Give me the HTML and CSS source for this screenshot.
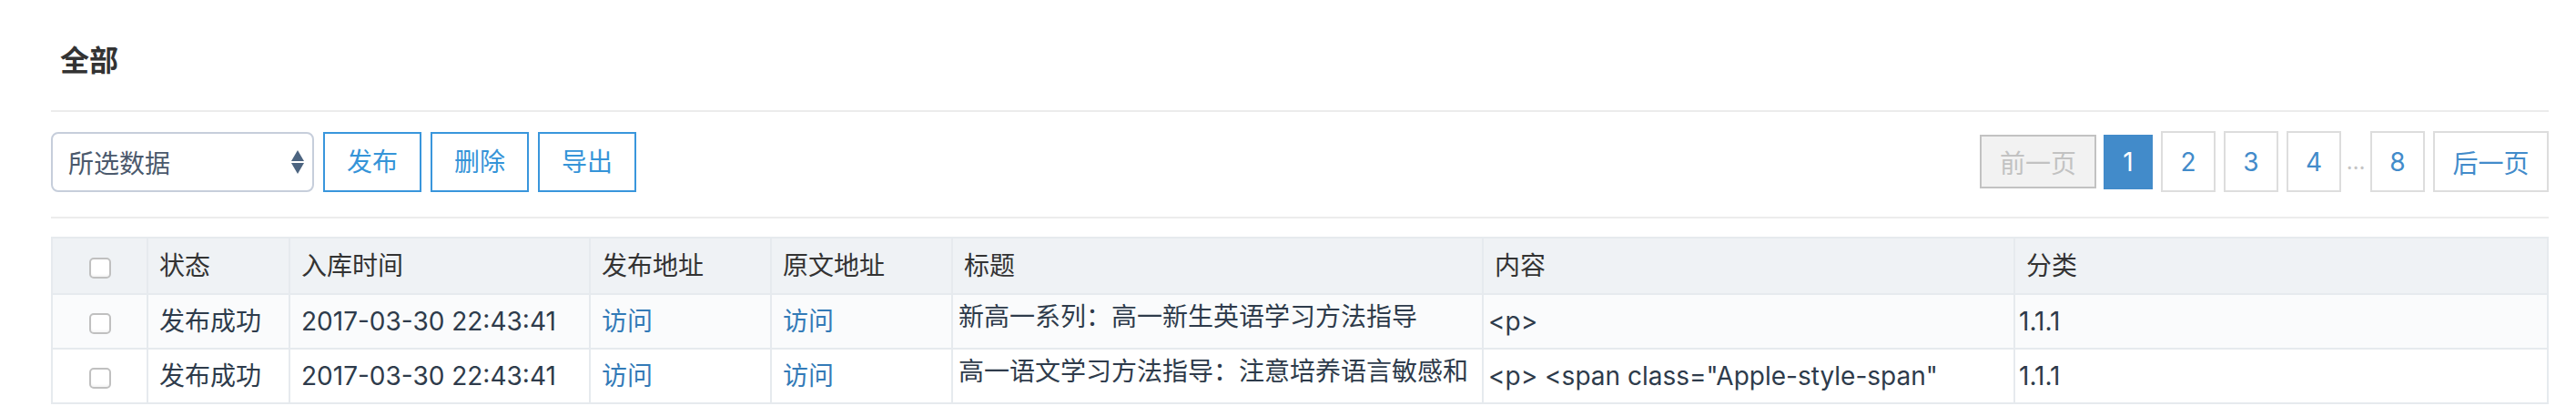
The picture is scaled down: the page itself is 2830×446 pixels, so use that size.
FILE: index.html
```html
<!DOCTYPE html>
<html lang="zh-CN">
<head>
  <meta charset="UTF-8">
  <title>全部</title>
  <link rel="stylesheet" href="styles.css">
</head>
<body>

<div class="page">
  <h2 class="title">全部</h2>

  <div class="toolbar">
    <div class="select">
      <span>所选数据</span>
      <svg class="arrows" width="14" height="26" viewBox="0 0 14 26">
        <polygon points="7,0 14,12 0,12" fill="#4c6480"/>
        <polygon points="0,14 14,14 7,26" fill="#4c6480"/>
      </svg>
    </div>
    <button class="btn">发布</button>
    <button class="btn">删除</button>
    <button class="btn">导出</button>

    <div class="pager">
      <span class="pg disabled">前一页</span>
      <span class="pg active">1</span>
      <a class="pg" href="#">2</a>
      <a class="pg" href="#">3</a>
      <a class="pg" href="#">4</a>
      <span class="dots">…</span>
      <a class="pg" href="#">8</a>
      <a class="pg wide" href="#">后一页</a>
    </div>
  </div>

  <table class="list">
    <colgroup>
      <col class="c-chk">
      <col class="c-state">
      <col class="c-time">
      <col class="c-url">
      <col class="c-url">
      <col class="c-title">
      <col class="c-content">
      <col>
    </colgroup>
    <thead>
      <tr>
        <th class="chk"><input type="checkbox" class="cb"></th>
        <th>状态</th>
        <th>入库时间</th>
        <th>发布地址</th>
        <th>原文地址</th>
        <th>标题</th>
        <th>内容</th>
        <th>分类</th>
      </tr>
    </thead>
    <tbody>
      <tr>
        <td class="chk"><input type="checkbox" class="cb"></td>
        <td>发布成功</td>
        <td>2017-03-30 22:43:41</td>
        <td><a href="#">访问</a></td>
        <td><a href="#">访问</a></td>
        <td class="ttl">新高一系列：高一新生英语学习方法指导</td>
        <td class="txt">&lt;p&gt;</td>
        <td class="cat">1.1.1</td>
      </tr>
      <tr>
        <td class="chk"><input type="checkbox" class="cb"></td>
        <td>发布成功</td>
        <td>2017-03-30 22:43:41</td>
        <td><a href="#">访问</a></td>
        <td><a href="#">访问</a></td>
        <td class="ttl">高一语文学习方法指导：注意培养语言敏感和</td>
        <td class="txt">&lt;p&gt; &lt;span class="Apple-style-span"</td>
        <td class="cat">1.1.1</td>
      </tr>
    </tbody>
  </table>
</div>

</body>
</html>
```

FILE: styles.css
```css
body { margin: 0; font-family: Inter, "Noto Sans CJK SC", sans-serif; font-size: 28px; color: #333; background: #fff; }
.page { padding: 0 30px 0 56px; }

.title { margin: 0; padding: 44px 0 31px 10px; font-size: 32px; line-height: 46px; font-weight: bold; color: #333; border-bottom: 2px solid #ececec; }

.toolbar { display: flex; align-items: center; padding: 21px 0 27px; border-bottom: 2px solid #ececec; }

.select { box-sizing: border-box; width: 289px; height: 66px; display: flex; align-items: center; padding: 0 9px 0 17px; border: 2px solid #c6cedb; border-radius: 8px; color: #4b596c; }
.select .arrows { margin-left: auto; }

.btn { box-sizing: border-box; width: 108px; height: 66px; margin-left: 10px; padding: 0; font-family: inherit; font-size: 28px; line-height: 62px; color: #3594d8; background: #fff; border: 2px solid #3996dc; cursor: pointer; }

.pager { margin-left: auto; display: flex; align-items: center; }
.pg { box-sizing: border-box; width: 60px; height: 67px; margin-left: 9px; display: flex; align-items: center; justify-content: center; border: 2px solid #ddd; background: #fff; color: #428bca; text-decoration: none; }
.pg.disabled { width: 128px; height: 59px; margin-left: 0; background: #f2f2f2; border-color: #c2c2c2; color: #c2c2c2; }
.pg.active { width: 54px; height: 60px; margin-left: 8px; background: #428bca; border-color: #428bca; color: #fff; }
.pg.wide { width: 127px; }
.dots { width: 32px; text-align: center; color: #c4c4c4; font-size: 24px; }
.dots + .pg { margin-left: 0; }

.list { width: 100%; margin-top: 20px; table-layout: fixed; border-collapse: separate; border-spacing: 0; border-top: 2px solid #e6eaee; border-left: 2px solid #e6eaee; }
.c-chk { width: 105px; }
.c-state { width: 156px; }
.c-time { width: 330px; }
.c-url { width: 199px; }
.c-title { width: 583px; }
.c-content { width: 584px; }
.list th, .list td { padding: 0 12px; text-align: left; font-weight: normal; white-space: nowrap; overflow: hidden; border-right: 2px solid #e6eaee; border-bottom: 2px solid #e6eaee; }
.list th { line-height: 60px; background: #eff2f5; color: #333; }
.list td { line-height: 58px; color: #2e3b4b; }
.list tbody tr:nth-child(odd) td { background: #fafbfc; }
.list a { color: #337ab7; text-decoration: none; }
.list .chk { padding: 0; text-align: center; }
.list td.ttl { vertical-align: top; padding: 4px 6px 0; line-height: 40px; }
.list td.txt { padding-left: 5px; }
.list td.cat { padding-left: 4px; }

.cb { appearance: none; -webkit-appearance: none; box-sizing: border-box; width: 24px; height: 23px; margin: 0; vertical-align: middle; border: 2px solid #c0c0c0; border-radius: 5px; background: #fff; box-shadow: inset 0 -2px 2px rgba(0,0,0,0.04); }
```
